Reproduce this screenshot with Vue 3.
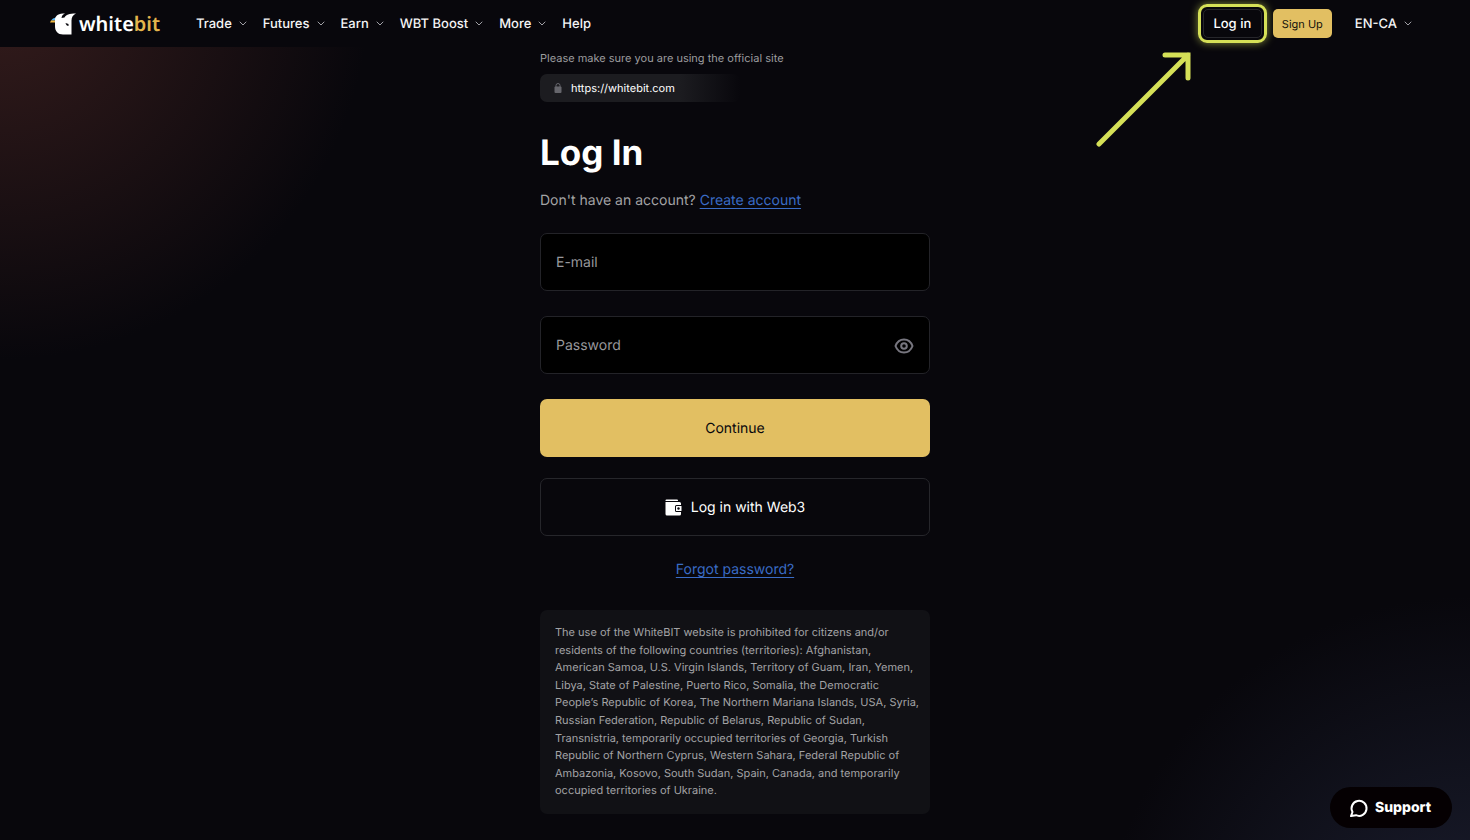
<template>
  <div class="page">
    <header class="header">
      <a class="logo" href="#" aria-label="whitebit">
        <svg class="logo-mark" viewBox="0 0 26 22" width="26" height="22" aria-hidden="true">
          <path d="M1 7.500L3 5.500L6 4.500V7.500Z" fill="#58b4f0" />
          <path d="M0 9.500L1 7.500H6V9.500Z" fill="#f0b840" />
          <path
            d="M5 6C6 2 8.500 .5 15 .5C13 1.200 12 2.500 11.500 5L14.500 4.500C16 1.800 19 .5 26 .5C23 2 21.500 4 21.500 7.500V21.500H13C8 21.500 5 18.500 5 13Z"
            fill="#fff"
          />
          <path d="M15.500 10L18.500 11V13C17 13 16 12 15.500 10Z" fill="#08070c" />
        </svg>
        <span class="logo-text">white<span class="logo-gold">bit</span></span>
      </a>

      <nav class="nav">
        <template v-for="item in navItems" :key="item.label">
          <button v-if="item.menu" class="nav-item" type="button">
            {{ item.label }}
            <svg class="chevron" viewBox="0 0 8 5" width="8" height="5" aria-hidden="true">
              <path d="M1 1L4 4L7 1" />
            </svg>
          </button>
          <a v-else class="nav-item" href="#">{{ item.label }}</a>
        </template>
      </nav>

      <div class="actions">
        <div class="login-wrap">
          <a class="btn-small btn-login" href="#">Log in</a>
          <svg class="pointer" viewBox="0 0 96 98" width="96" height="98" aria-hidden="true">
            <path d="M3 94L92 5M69 5H92V28" />
          </svg>
        </div>
        <a class="btn-small btn-signup" href="#">Sign Up</a>
        <button class="nav-item lang" type="button">
          EN-CA
          <svg class="chevron" viewBox="0 0 8 5" width="8" height="5" aria-hidden="true">
            <path d="M1 1L4 4L7 1" />
          </svg>
        </button>
      </div>
    </header>

    <main class="main">
      <p class="hint">Please make sure you are using the official site</p>
      <div class="site">
        <svg viewBox="0 0 8 10" width="8" height="10" aria-hidden="true">
          <path d="M2 4V2.500a2 2 0 0 1 4 0V4" fill="none" stroke="#66666c" stroke-width="1" />
          <rect x="0.500" y="3.500" width="7" height="6.500" rx="1" fill="#66666c" />
        </svg>
        <span>https://whitebit.com</span>
      </div>

      <h1 class="title">Log In</h1>
      <p class="signup-line">Don't have an account? <a class="link" href="#">Create account</a></p>

      <form class="form" @submit.prevent>
        <div class="field">
          <input id="email" v-model="email" type="email" />
          <label v-show="!email" for="email">E-mail</label>
        </div>
        <div class="field">
          <input id="password" v-model="password" :type="showPassword ? 'text' : 'password'" />
          <label v-show="!password" for="password">Password</label>
          <button class="eye" type="button" aria-label="Show password" @click="showPassword = !showPassword">
            <svg viewBox="0 0 20 16" width="20" height="16" aria-hidden="true">
              <path d="M10 1.500C14 1.500 17 4 18.500 8C17 12 14 14.500 10 14.500S3 12 1.500 8C3 4 6 1.500 10 1.500Z" />
              <circle cx="10" cy="8" r="2.800" />
            </svg>
          </button>
        </div>
        <button class="btn btn-primary" type="submit">Continue</button>
        <button class="btn btn-outline" type="button">
          <svg viewBox="0 0 17 17" width="17" height="17" aria-hidden="true">
            <path d="M1.500 .5H12A1 1 0 0 1 13 1.500V2H.5V1.500A1 1 0 0 1 1.500 .5Z" fill="#fff" />
            <path d="M.5 3H14.500A1.500 1.500 0 0 1 16 4.500V6H11.500A1.500 1.500 0 0 0 10 7.500V11.500A1.500 1.500 0 0 0 11.500 13H16V15A1.500 1.500 0 0 1 14.500 16.500H2A1.500 1.500 0 0 1 .5 15Z" fill="#fff" />
            <path d="M11.500 7H16.500V12H11.500A.5 .5 0 0 1 11 11.500V7.500A.5 .5 0 0 1 11.500 7Z" fill="#fff" />
            <circle cx="13.500" cy="9.500" r="1.200" fill="#08070c" />
          </svg>
          Log in with Web3
        </button>
      </form>

      <a class="link forgot" href="#">Forgot password?</a>

      <p class="notice">
        The use of the WhiteBIT website is prohibited for citizens and/or residents of the following
        countries (territories): Afghanistan, American Samoa, U.S. Virgin Islands, Territory of Guam,
        Iran, Yemen, Libya, State of Palestine, Puerto Rico, Somalia, the Democratic People’s Republic
        of Korea, The Northern Mariana Islands, USA, Syria, Russian Federation, Republic of Belarus,
        Republic of Sudan, Transnistria, temporarily occupied territories of Georgia, Turkish Republic
        of Northern Cyprus, Western Sahara, Federal Republic of Ambazonia, Kosovo, South Sudan, Spain,
        Canada, and temporarily occupied territories of Ukraine.
      </p>
    </main>

    <button class="support" type="button">
      <svg viewBox="0 0 20 20" width="20" height="20" aria-hidden="true">
        <path d="M2 18L3.500 14A7.500 7.500 0 1 1 7 17.200Z" />
      </svg>
      Support
    </button>
  </div>
</template>

<script setup>
import { ref } from 'vue'

const email = ref('')
const password = ref('')
const showPassword = ref(false)

const navItems = [
  { label: 'Trade', menu: true },
  { label: 'Futures', menu: true },
  { label: 'Earn', menu: true },
  { label: 'WBT Boost', menu: true },
  { label: 'More', menu: true },
  { label: 'Help', menu: false }
]
</script>

<style>
body {
  background: #08070c;
}
</style>

<style scoped>
.page,
.page * {
  box-sizing: border-box;
}

.page {
  display: flex;
  flex-direction: column;
  min-height: 100vh;
  font-family: Inter, 'Liberation Sans', sans-serif;
  text-rendering: geometricPrecision;
  color: #fff;
  background:
    radial-gradient(circle 370px at 0 -10px, #351c1c, transparent),
    radial-gradient(circle 370px at 100% 115%, #1c1f31, transparent),
    #08070c;
}

p,
h1 {
  margin: 0;
}

button {
  padding: 0;
  border: none;
  background: none;
  color: inherit;
  font-family: inherit;
  text-rendering: inherit;
  cursor: pointer;
}

a {
  color: inherit;
  text-decoration: none;
}

/* ── Header ── */
.header {
  display: flex;
  align-items: center;
  height: 47px;
  padding: 0 58px 0 50px;
  background: #08070c;
}

.logo {
  display: flex;
  align-items: center;
  gap: 3px;
  width: 146px;
}

.logo-text {
  font-family: 'Noto Sans', sans-serif;
  font-size: 20px;
  font-weight: 600;
  line-height: 24px;
}

.logo-gold {
  color: #e3b54c;
}

.nav {
  display: flex;
  gap: 16px;
}

.nav-item {
  display: flex;
  align-items: center;
  gap: 7px;
  font-size: 13px;
  font-weight: 500;
  line-height: 18px;
  color: #f4f4f5;
}

.chevron {
  fill: none;
  stroke: #a0a0a6;
  stroke-width: 1;
  stroke-linecap: round;
  stroke-linejoin: round;
}

.actions {
  display: flex;
  align-items: center;
  gap: 11px;
  margin-left: auto;
}

.login-wrap {
  position: relative;
}

.btn-small {
  display: flex;
  align-items: center;
  justify-content: center;
  width: 59px;
  height: 29px;
  border-radius: 5px;
  font-size: 11px;
}

.btn-login {
  border: 1px solid #26262b;
  font-size: 13px;
  font-weight: 500;
}

.btn-login::after {
  content: '';
  position: absolute;
  inset: -5px;
  border: 3px solid #d5e057;
  border-radius: 9px;
  box-shadow: 0 0 9px rgba(217, 228, 90, 0.6);
  pointer-events: none;
}

.pointer {
  position: absolute;
  top: 41px;
  right: 70px;
  fill: none;
  stroke: #d5e057;
  stroke-width: 5;
  stroke-linecap: round;
  pointer-events: none;
}

.btn-signup {
  background: #e2bf62;
  color: #14120c;
}

.lang {
  margin-left: 12px;
}

/* ── Form column ── */
.main {
  display: flex;
  flex-direction: column;
  width: 100%;
  max-width: 390px;
  margin: 0 auto;
  padding: 2px 0 26px;
}

.hint {
  font-size: 11px;
  line-height: 18px;
  color: #9c9c9e;
}

.site {
  display: flex;
  align-items: center;
  gap: 9px;
  width: 200px;
  height: 28px;
  margin-top: 7px;
  padding-left: 14px;
  border-radius: 7px;
  background: linear-gradient(90deg, #1c1c20 70%, transparent);
  font-size: 11px;
}

.title {
  margin-top: 30px;
  font-size: 35px;
  font-weight: 700;
  line-height: 42px;
}

.signup-line {
  margin-top: 17px;
  font-size: 14px;
  line-height: 20px;
  color: #a3a3a5;
}

.link {
  color: #3a6cc6;
  text-decoration: underline;
  text-underline-offset: 3px;
}

.form {
  display: flex;
  flex-direction: column;
  margin-top: 22px;
}

.field {
  position: relative;
  height: 58px;
  margin-bottom: 25px;
}

.field input {
  width: 100%;
  height: 100%;
  padding: 0 15px;
  border: 1px solid #232328;
  border-radius: 7px;
  outline: none;
  background: #000;
  color: #fff;
  font-family: inherit;
  font-size: 14px;
}

.field input:focus {
  border-color: #e2bf62;
}

/* sits over the empty input like a placeholder */
.field label {
  position: absolute;
  top: 20px;
  left: 16px;
  font-size: 14px;
  line-height: 20px;
  color: #98989c;
  pointer-events: none;
}

.eye {
  position: absolute;
  top: 22px;
  right: 16px;
  height: 16px;
}

.eye svg {
  display: block;
  fill: none;
  stroke: #77767f;
  stroke-width: 2;
}

.btn {
  display: flex;
  align-items: center;
  justify-content: center;
  gap: 9px;
  height: 58px;
  border-radius: 7px;
  font-size: 14px;
}

.btn-primary {
  background: #e2bf62;
  color: #08070c;
}

.btn-outline {
  margin-top: 21px;
  border: 1px solid #26262b;
}

.forgot {
  align-self: center;
  margin-top: 24px;
  font-size: 14px;
  line-height: 20px;
}

.notice {
  margin-top: 30px;
  padding: 14px 10px 14px 15px;
  border-radius: 7px;
  background: #111115;
  font-size: 11px;
  line-height: 1.6;
  color: #a3a3a5;
}

/* ── Support chat ── */
.support {
  position: fixed;
  right: 18px;
  bottom: 12px;
  display: flex;
  align-items: center;
  justify-content: center;
  gap: 6px;
  width: 122px;
  height: 41px;
  padding-right: 2px;
  border-radius: 21px;
  background: #050002;
  font-size: 14px;
  font-weight: 800;
}

.support svg {
  fill: none;
  stroke: #fff;
  stroke-width: 2;
  stroke-linejoin: round;
}

@media (max-width: 900px) {
  .nav {
    display: none;
  }

  .main {
    padding-left: 16px;
    padding-right: 16px;
  }
}
</style>
